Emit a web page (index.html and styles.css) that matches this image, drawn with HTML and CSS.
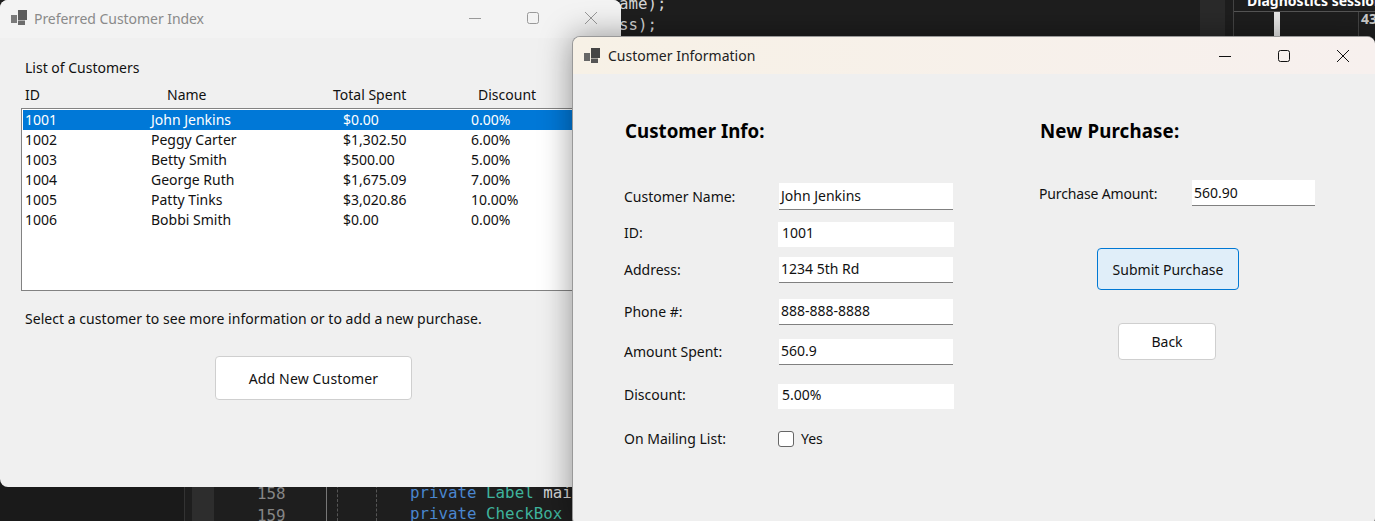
FILE: index.html
```html
<!DOCTYPE html>
<html lang="en">
<head>
    <meta charset="UTF-8">
    <title>Preferred Customer Index</title>
    <link rel="stylesheet" href="styles.css">
</head>
<body>
<div class="desktop">

    <!-- Editor behind the windows -->
    <div class="band band-left"></div>
    <div class="band band-gutter"></div>
    <div class="line line-gutter"></div>
    <div class="line line-margin"></div>
    <div class="line line-guide1"></div>
    <div class="line line-guide2"></div>
    <div class="code code-top1">ame);</div>
    <div class="code code-top2">ss);</div>
    <div class="code lineno lineno1">158</div>
    <div class="code lineno lineno2">159</div>
    <div class="code code-bot1"><span class="kw">private</span> <span class="ty">Label</span> mai</div>
    <div class="code code-bot2"><span class="kw">private</span> <span class="ty">CheckBox</span> c</div>
    <div class="band band-right"></div>
    <div class="diag-rule"></div>
    <div class="diag-left"></div>
    <div class="diag-bar"></div>
    <div class="diag-tick"></div>
    <div class="diag-title">Diagnostics session: 43 seconds</div>
    <div class="diag-time">43</div>

    <!-- Customer list window -->
    <section class="window index-window">
        <div class="titlebar titlebar-idle">
            <svg class="app-icon" viewBox="0 0 16 16"><rect x="7" y="0" width="9" height="10" fill="#444"/><rect x="0" y="5" width="6" height="8" fill="#666"/><rect x="7" y="10.5" width="7" height="4.5" fill="#555"/></svg>
            <span class="title">Preferred Customer Index</span>
            <div class="controls controls-idle">
                <svg viewBox="0 0 14 14"><path d="M1 7.5H13" stroke="currentColor" fill="none"/></svg>
                <svg viewBox="0 0 14 14"><rect x="1.5" y="1.5" width="11" height="11" rx="2" stroke="currentColor" fill="none"/></svg>
                <svg viewBox="0 0 14 14"><path d="M1 1L13 13M13 1L1 13" stroke="currentColor" fill="none"/></svg>
            </div>
        </div>
        <div class="index-body">
            <p class="list-title">List of Customers</p>
            <div class="list-head">
                <span>ID</span><span>Name</span><span>Total Spent</span><span>Discount</span>
            </div>
            <div class="listbox">
                <div class="row selected"><span>1001</span><span>John Jenkins</span><span>$0.00</span><span>0.00%</span></div>
                <div class="row"><span>1002</span><span>Peggy Carter</span><span>$1,302.50</span><span>6.00%</span></div>
                <div class="row"><span>1003</span><span>Betty Smith</span><span>$500.00</span><span>5.00%</span></div>
                <div class="row"><span>1004</span><span>George Ruth</span><span>$1,675.09</span><span>7.00%</span></div>
                <div class="row"><span>1005</span><span>Patty Tinks</span><span>$3,020.86</span><span>10.00%</span></div>
                <div class="row"><span>1006</span><span>Bobbi Smith</span><span>$0.00</span><span>0.00%</span></div>
            </div>
            <p class="hint">Select a customer to see more information or to add a new purchase.</p>
            <button class="btn add-btn">Add New Customer</button>
        </div>
    </section>

    <!-- Customer detail window -->
    <section class="window info-window">
        <div class="titlebar titlebar-active">
            <svg class="app-icon" viewBox="0 0 16 16"><rect x="7" y="0" width="9" height="10" fill="#444"/><rect x="0" y="5" width="6" height="8" fill="#666"/><rect x="7" y="10.5" width="7" height="4.5" fill="#555"/></svg>
            <span class="title">Customer Information</span>
            <div class="controls">
                <svg viewBox="0 0 14 14"><path d="M1 7.5H13" stroke="currentColor" fill="none"/></svg>
                <svg viewBox="0 0 14 14"><rect x="1.5" y="1.5" width="11" height="11" rx="2" stroke="currentColor" fill="none"/></svg>
                <svg viewBox="0 0 14 14"><path d="M1 1L13 13M13 1L1 13" stroke="currentColor" fill="none"/></svg>
            </div>
        </div>
        <div class="info-body">
            <div class="info-col">
                <h2 class="heading">Customer Info:</h2>
                <div class="field field-name"><label>Customer Name:</label><div class="box">John Jenkins</div></div>
                <div class="field field-id"><label>ID:</label><div class="box plain">1001</div></div>
                <div class="field field-address"><label>Address:</label><div class="box">1234 5th Rd</div></div>
                <div class="field field-phone"><label>Phone #:</label><div class="box">888-888-8888</div></div>
                <div class="field field-amount"><label>Amount Spent:</label><div class="box">560.9</div></div>
                <div class="field field-discount"><label>Discount:</label><div class="box plain">5.00%</div></div>
                <div class="field field-mail"><label>On Mailing List:</label><span class="check"></span><span class="yes">Yes</span></div>
            </div>
            <div class="purchase-col">
                <h2 class="heading heading-purchase">New Purchase:</h2>
                <div class="field field-purchase"><label>Purchase Amount:</label><div class="box">560.90</div></div>
                <button class="btn submit-btn">Submit Purchase</button>
                <button class="btn back-btn">Back</button>
            </div>
        </div>
    </section>

</div>
</body>
</html>
```

FILE: styles.css
```css
* {
    box-sizing: border-box;
}
html, body {
    margin: 0;
    padding: 0;
}
body {
    font-family: "Noto Sans", Arial, sans-serif;
    font-size: 14px;
    color: #111;
}
p, h2 {
    margin: 0;
}

.desktop {
    position: relative;
    width: 1375px;
    height: 521px;
    overflow: hidden;
    background: #1e1e1e;
}

/* editor pieces */
.band, .line, .code, .diag-rule, .diag-left, .diag-bar, .diag-tick, .diag-title, .diag-time {
    position: absolute;
}
.band-left { left: 0; top: 480px; width: 184px; height: 41px; background: #1a1a1a; }
.band-gutter { left: 192px; top: 480px; width: 22px; height: 41px; background: #2d2d2d; }
.band-right { left: 1200px; top: 0; width: 25px; height: 40px; background: #2a2a2a; }
.line { top: 480px; height: 41px; width: 1px; }
.line-gutter { left: 184px; background: #333; }
.line-margin { left: 326px; background: #777; }
.line-guide1 { left: 337px; border-left: 1px dashed #555; }
.line-guide2 { left: 376px; border-left: 1px dashed #555; }
.code {
    font-family: "DejaVu Sans Mono", monospace;
    font-size: 15.8px;
    line-height: 20px;
    color: #d6d6d6;
    white-space: pre;
}
.code-top1 { left: 619px; top: -6px; }
.code-top2 { left: 619px; top: 15px; }
.lineno { color: #858585; left: 257px; }
.lineno1 { top: 484px; }
.lineno2 { top: 506px; }
.code-bot1 { left: 410px; top: 483px; }
.code-bot2 { left: 410px; top: 504px; }
.kw { color: #4a86cf; }
.ty { color: #3fb39c; }
.diag-rule { left: 1233px; top: 11px; width: 142px; height: 1px; background: #555; }
.diag-left { left: 1233px; top: 0; width: 1px; height: 40px; background: #444; }
.diag-bar { left: 1274px; top: 12px; width: 6px; height: 26px; background: #e8e8e8; }
.diag-tick { left: 1358px; top: 12px; width: 1px; height: 26px; background: #444; }
.diag-title { left: 1247px; top: -9px; color: #fff; font-weight: 700; font-size: 14px; white-space: nowrap; }
.diag-time { left: 1361px; top: 9px; color: #ccc; font-weight: 700; font-size: 14px; }

/* windows */
.window {
    position: absolute;
    overflow: hidden;
    background: #f0f0f0;
}
.index-window {
    left: 0;
    top: 0;
    width: 621px;
    height: 487px;
    border-radius: 8px;
}
.info-window {
    left: 572px;
    top: 36px;
    width: 803px;
    height: 490px;
    border-radius: 8px;
    border: 1px solid #999;
    border-width: 1px 0 0 1px;
    box-shadow: 0 0 32px rgba(0, 0, 0, 0.4);
    background: #efefef;
}
.titlebar {
    display: flex;
    align-items: center;
}
.titlebar-idle {
    height: 38px;
    padding: 0 0 2px 11px;
    background: #f3f3f3;
    color: #8a8a8a;
}
.titlebar-active {
    height: 37px;
    padding-left: 11px;
    background: linear-gradient(90deg, #f7f1e6, #f7f0ee);
    color: #222;
}
.app-icon {
    width: 16px;
    height: 16px;
    flex: none;
}
.titlebar-idle .app-icon {
    opacity: 0.85;
}
.title {
    margin-left: 8px;
}
.titlebar-idle .title {
    margin-left: 7px;
    letter-spacing: -0.05px;
}
.controls {
    display: flex;
    gap: 45px;
    margin-left: auto;
    margin-right: 25px;
    color: #111;
}
.controls svg {
    width: 14px;
    height: 14px;
}
.controls-idle {
    gap: 44px;
    margin-right: 23px;
    color: #999;
}

/* list window */
.index-body {
    padding: 20px 0 0 21px;
}
.list-title {
    margin-left: 4px;
    line-height: 19px;
}
.list-head {
    display: grid;
    grid-template-columns: 142px 166px 145px auto;
    justify-content: start;
    margin: 8px 0 4px 4px;
    line-height: 19px;
}
.listbox {
    width: 580px;
    height: 183px;
    padding: 1px;
    border: 1px solid #828282;
    background: #fff;
}
.row {
    display: grid;
    grid-template-columns: 126px 192px 128px 1fr;
    height: 20px;
    line-height: 20px;
    padding-left: 2px;
}
.selected {
    background: #0078d7;
    color: #fff;
}
.hint {
    margin: 18px 0 0 4px;
    line-height: 20px;
    letter-spacing: 0.04px;
}
.btn {
    display: block;
    padding: 0;
    font: inherit;
    color: #111;
    background: #fff;
    border: 1px solid #cfcfcf;
    border-radius: 4px;
}
.add-btn {
    width: 197px;
    height: 44px;
    margin: 27px 0 0 194px;
    letter-spacing: 0.15px;
}

/* info window */
.info-body {
    display: flex;
    padding: 44px 0 0 51px;
}
.info-col {
    width: 415px;
}
.heading {
    margin-left: 1px;
    font-size: 18.7px;
    font-weight: 700;
    line-height: 26px;
    color: #000;
}
.field {
    display: flex;
    align-items: center;
}
.field label {
    width: 154px;
    flex: none;
    padding-bottom: 2px;
}
.box {
    width: 174px;
    height: 26px;
    margin-left: 1px;
    padding-left: 2px;
    line-height: 24px;
    background: #fff;
    border-bottom: 1px solid #808080;
}
.plain {
    width: 176px;
    height: 25px;
    margin-left: 0;
    padding-left: 4px;
    line-height: 22px;
    border-bottom: 0;
}
.field-name { margin-top: 39px; }
.field-name .box { height: 27px; line-height: 26px; }
.field-name label { padding-bottom: 0; }
.field-id { margin-top: 12px; }
.field-id label { padding-bottom: 4px; }
.field-address { margin-top: 10px; }
.field-phone { margin-top: 16px; }
.field-amount { margin-top: 14px; }
.field-discount { margin-top: 19px; }
.field-discount label { padding-bottom: 4px; }
.field-mail {
    align-items: flex-start;
    height: 16px;
    margin-top: 22px;
    line-height: 16px;
}
.field-mail label { padding-bottom: 0; }
.check {
    width: 16px;
    height: 16px;
    background: #fff;
    border: 1px solid #666;
    border-radius: 3px;
}
.yes {
    margin-left: 7px;
}
.purchase-col {
    width: 290px;
}
.heading-purchase {
    margin-left: 1px;
    letter-spacing: 0.15px;
}
.field-purchase {
    margin-top: 36px;
}
.field-purchase label {
    width: 153px;
    padding-bottom: 0;
    letter-spacing: -0.15px;
}
.field-purchase .box {
    width: 123px;
    margin-left: 0;
    line-height: 25px;
}
.submit-btn {
    width: 142px;
    height: 42px;
    margin: 42px 0 0 58px;
    background: #e0eef9;
    border-color: #0078d4;
}
.back-btn {
    width: 98px;
    height: 37px;
    margin: 33px 0 0 79px;
}
```
